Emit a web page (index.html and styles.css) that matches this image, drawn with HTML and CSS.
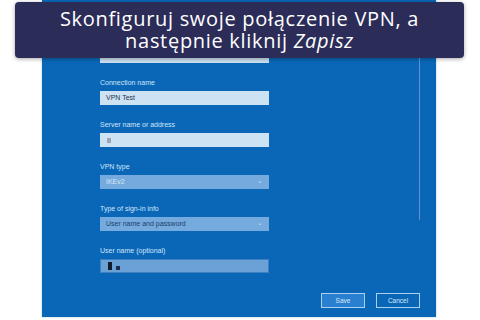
FILE: index.html
```html
<!DOCTYPE html>
<html lang="pl">
<head>
  <meta charset="UTF-8" />
  <meta name="viewport" content="width=device-width, initial-scale=1.0"/>
  <title>Konfiguracja VPN</title>
  <link rel="stylesheet" href="styles.css">
</head>
<body>
  <div class="stage">
    <div class="panel">
      <div class="fields">
        <div class="input partial"></div>

        <div class="field">
          <label>Connection name</label>
          <div class="input">VPN Test</div>
        </div>

        <div class="field">
          <label>Server name or address</label>
          <div class="input"><span class="blur-mark"></span></div>
        </div>

        <div class="field">
          <label>VPN type</label>
          <div class="select faint">IKEv2 <span class="chev">&#8964;</span></div>
        </div>

        <div class="field">
          <label>Type of sign-in info</label>
          <div class="select">User name and password <span class="chev">&#8964;</span></div>
        </div>

        <div class="field">
          <label>User name (optional)</label>
          <div class="input dark">
            <span class="redact tall"></span>
            <span class="redact small"></span>
          </div>
        </div>
      </div>

      <div class="scrollbar"></div>

      <div class="button-group">
        <button class="primary">Save</button>
        <button>Cancel</button>
      </div>
    </div>

    <!-- napis na górze -->
    <div class="caption">
      <div class="line">Skonfiguruj swoje połączenie VPN, a</div>
      <div class="line">następnie kliknij <em>Zapisz</em></div>
    </div>
  </div>
</body>
</html>
```

FILE: styles.css
```css
:root {
  --panel-blue: #0a67b8;
  --label-color: #cfe5f8;
  --input-light: #cde2f3;
  --input-mid: #74aadd;
  --caption-bg: #2b2c58;
}
* { box-sizing: border-box; }
body {
  margin: 0;
  background: #ffffff;
  font-family: "Liberation Sans", Arial, sans-serif;
  overflow: hidden;
}
.stage {
  position: relative;
  width: 480px;
  height: 320px;
}
.panel {
  position: relative;
  margin-left: 42px;
  width: 394px;
  height: 317px;
  background: var(--panel-blue);
  box-shadow: 0 0 2px rgba(120, 160, 200, 0.6);
  display: flex;
  flex-direction: column;
  padding: 49px 16px 9px 58px;
}
.fields {
  display: flex;
  flex-direction: column;
  gap: 15px;
  width: 169px;
}
.field { display: flex; flex-direction: column; }
label {
  font-size: 7px;
  line-height: 10px;
  color: var(--label-color);
  margin-bottom: 3px;
}
.input, .select {
  height: 14px;
  font-size: 7px;
  line-height: 14px;
  padding: 0 6px;
  color: #1d3550;
  background: var(--input-light);
  display: flex;
  align-items: center;
}
.input.dark {
  background: #6aa2d7;
  border: 1px solid #3f80c0;
  gap: 4px;
  padding: 0 7px;
}
.select {
  background: var(--input-mid);
  justify-content: space-between;
  color: #1e4068;
}
.select.faint { color: #d9e8f5; }
.chev {
  font-size: 7px;
  line-height: 14px;
  color: #c5dcf1;
  margin-top: -3px;
}
.blur-mark {
  width: 4px;
  height: 5px;
  background: #9aa6b2;
  margin-left: 1px;
}
.redact { background: #141c2c; }
.redact.tall { width: 4px; height: 8px; }
.redact.small { width: 4px; height: 4px; background: #1f2c4a; margin-top: 3px; }
.scrollbar {
  position: absolute;
  left: 377px;
  top: 58px;
  width: 1px;
  height: 162px;
  background: #5f93c9;
}
.button-group {
  margin-top: auto;
  display: flex;
  justify-content: flex-end;
  gap: 11px;
}
button {
  width: 44px;
  height: 15px;
  padding: 0;
  font-family: "Liberation Sans", Arial, sans-serif;
  font-size: 6.5px;
  color: #d6e8f8;
  background: var(--panel-blue);
  border: 1px solid #a9d0f2;
}
button.primary { background: #2a80d0; }
.caption {
  position: absolute;
  left: 15px;
  top: 2px;
  width: 449px;
  height: 56px;
  padding-top: 6px;
  background: var(--caption-bg);
  border-radius: 4px;
  box-shadow: 0 1px 4px rgba(0, 0, 0, 0.35);
  color: #ffffff;
  font-family: "Open Sans", sans-serif;
  font-size: 20px;
  font-weight: 500;
  letter-spacing: 0.7px;
  text-align: center;
}
.caption .line { height: 22px; line-height: 22px; }
.caption em { font-style: italic; }
```
